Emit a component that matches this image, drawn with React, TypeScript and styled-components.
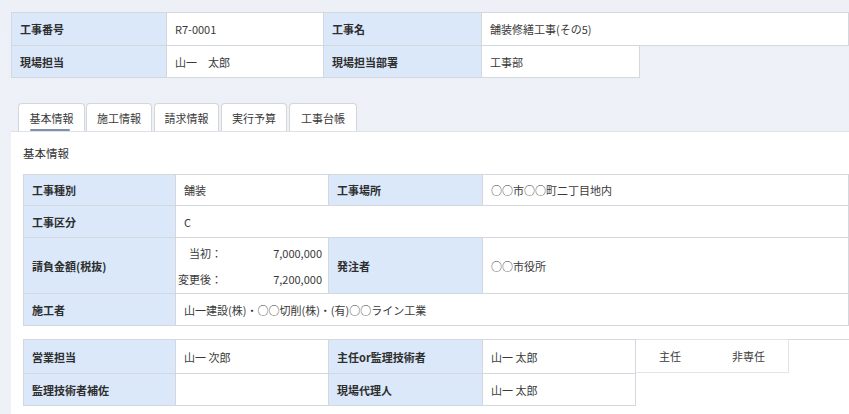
import React from "react";
import styled, { createGlobalStyle } from "styled-components";

const Global = createGlobalStyle`
  html, body { margin: 0; padding: 0; }
  body {
    background: linear-gradient(180deg, #edf0f6 0%, #eef1f6 100%);
    font-family: "Noto Sans CJK JP", "Noto Sans", sans-serif;
    color: #333;
    overflow: hidden;
  }
`;

const Page = styled.div`
  width: 849px;
  height: 414px;
  padding: 12px 0 0 11px;
  box-sizing: border-box;
  overflow: hidden;
`;

const Table = styled.div`
  display: flex;
  flex-direction: column;
  border-top: 1px solid #d3d8df;
`;

const Row = styled.div`
  display: flex;
`;

const Cell = styled.div<{ $w?: number; $label?: boolean; $h?: number }>`
  box-sizing: border-box;
  ${(p) => (p.$w ? `width: ${p.$w}px; flex: none;` : "flex: 1;")}
  height: ${(p) => p.$h ?? 33}px;
  display: flex;
  align-items: center;
  padding: 0 8px;
  font-size: 11px;
  font-weight: ${(p) => (p.$label ? 700 : 400)};
  color: ${(p) => (p.$label ? "#2e2e2e" : "#3a3a3a")};
  background: ${(p) => (p.$label ? "#dae8fa" : "#ffffff")};
  border-right: 1px solid #d3d8df;
  border-bottom: 1px solid #d3d8df;
  white-space: nowrap;
  &:first-child { border-left: 1px solid #d3d8df; }
`;

const ExtraBox = styled(Cell)`
  display: grid;
  grid-template-columns: 73px auto;
  align-content: center;
  padding: 0 0 0 23px;
  border-top: 1px solid #e2e4e8;
  border-right-color: #e2e4e8;
  border-bottom-color: #e2e4e8;
  margin-top: -1px;
`;

const Tabs = styled.div`
  display: flex;
  margin: 25px 0 0 7px;
  height: 28px;
  align-items: flex-end;
`;

const Tab = styled.div<{ $active?: boolean; $w: number; $gap: number }>`
  position: relative;
  width: ${(p) => p.$w}px;
  margin-right: ${(p) => p.$gap}px;
  height: 28px;
  box-sizing: border-box;
  border: 1px solid #d2d6dd;
  border-bottom: none;
  border-radius: 4px 4px 0 0;
  background: #ffffff;
  display: flex;
  align-items: center;
  justify-content: center;
  font-size: 11px;
  color: #3a3a3a;
  &::after {
    content: "";
    display: ${(p) => (p.$active ? "block" : "none")};
    position: absolute;
    left: 11px;
    right: 14px;
    bottom: 0px;
    height: 2px;
    background: #7f90aa;
    border-radius: 1px;
  }
`;

const Panel = styled.div`
  background: #ffffff;
  border-top: 1px solid #dde1e7;
  padding: 0 0 20px 12px;
  height: 300px;
`;

const SectionTitle = styled.div`
  font-size: 11.5px;
  color: #333;
  height: 42px;
  display: flex;
  align-items: center;
  box-sizing: border-box;
`;

const Gap = styled.div`
  height: 13px;
`;

const Amounts = styled.div`
  display: grid;
  grid-template-columns: 44px 1fr;
  row-gap: 10px;
  width: 100%;
`;

const AmtLabel = styled.span`
  text-align: right;
`;

const AmtValue = styled.span`
  text-align: right;
`;

const AmountCell = styled(Cell)`
  padding: 0 6px 0 2px;
`;

export default function App() {
  return (
    <>
      <Global />
      <Page>
        <Table>
          <Row>
            <Cell $w={156} $label>工事番号</Cell>
            <Cell $w={157}>R7-0001</Cell>
            <Cell $w={158} $label>工事名</Cell>
            <Cell>舗装修繕工事(その5)</Cell>
          </Row>
          <Row>
            <Cell $w={156} $label $h={32}>現場担当</Cell>
            <Cell $w={157} $h={32}>山一　太郎</Cell>
            <Cell $w={158} $label $h={32}>現場担当部署</Cell>
            <Cell $w={158} $h={32}>工事部</Cell>
          </Row>
        </Table>

        <Tabs>
          <Tab $w={67} $gap={1} $active>基本情報</Tab>
          <Tab $w={66} $gap={2}>施工情報</Tab>
          <Tab $w={65} $gap={2}>請求情報</Tab>
          <Tab $w={66} $gap={2}>実行予算</Tab>
          <Tab $w={68} $gap={0}>工事台帳</Tab>
        </Tabs>

        <Panel>
          <SectionTitle>基本情報</SectionTitle>
          <Table>
            <Row>
              <Cell $w={153} $label $h={31}>工事種別</Cell>
              <Cell $w={153} $h={31}>舗装</Cell>
              <Cell $w={154} $label $h={31}>工事場所</Cell>
              <Cell $h={31}>○○市○○町二丁目地内</Cell>
            </Row>
            <Row>
              <Cell $w={153} $label $h={32}>工事区分</Cell>
              <Cell $h={32}>C</Cell>
            </Row>
            <Row>
              <Cell $w={153} $label $h={56}>請負金額(税抜)</Cell>
              <AmountCell $w={153} $h={56}>
                <Amounts>
                  <AmtLabel>当初：</AmtLabel>
                  <AmtValue>7,000,000</AmtValue>
                  <AmtLabel>変更後：</AmtLabel>
                  <AmtValue>7,200,000</AmtValue>
                </Amounts>
              </AmountCell>
              <Cell $w={154} $label $h={56}>発注者</Cell>
              <Cell $h={56}>○○市役所</Cell>
            </Row>
            <Row>
              <Cell $w={153} $label $h={32}>施工者</Cell>
              <Cell $h={32}>山一建設(株)・○○切削(株)・(有)○○ライン工業</Cell>
            </Row>
          </Table>

          <Gap />

          <Table>
            <Row>
              <Cell $w={153} $label $h={34}>営業担当</Cell>
              <Cell $w={153} $h={34}>山一 次郎</Cell>
              <Cell $w={154} $label $h={34}>主任or監理技術者</Cell>
              <Cell $w={153} $h={34}>山一 太郎</Cell>
              <ExtraBox $w={153} $h={34}>
                <span>主任</span>
                <span>非専任</span>
              </ExtraBox>
            </Row>
            <Row>
              <Cell $w={153} $label $h={32}>監理技術者補佐</Cell>
              <Cell $w={153} $h={32}></Cell>
              <Cell $w={154} $label $h={32}>現場代理人</Cell>
              <Cell $w={153} $h={32}>山一 太郎</Cell>
            </Row>
          </Table>
        </Panel>
      </Page>
    </>
  );
}
